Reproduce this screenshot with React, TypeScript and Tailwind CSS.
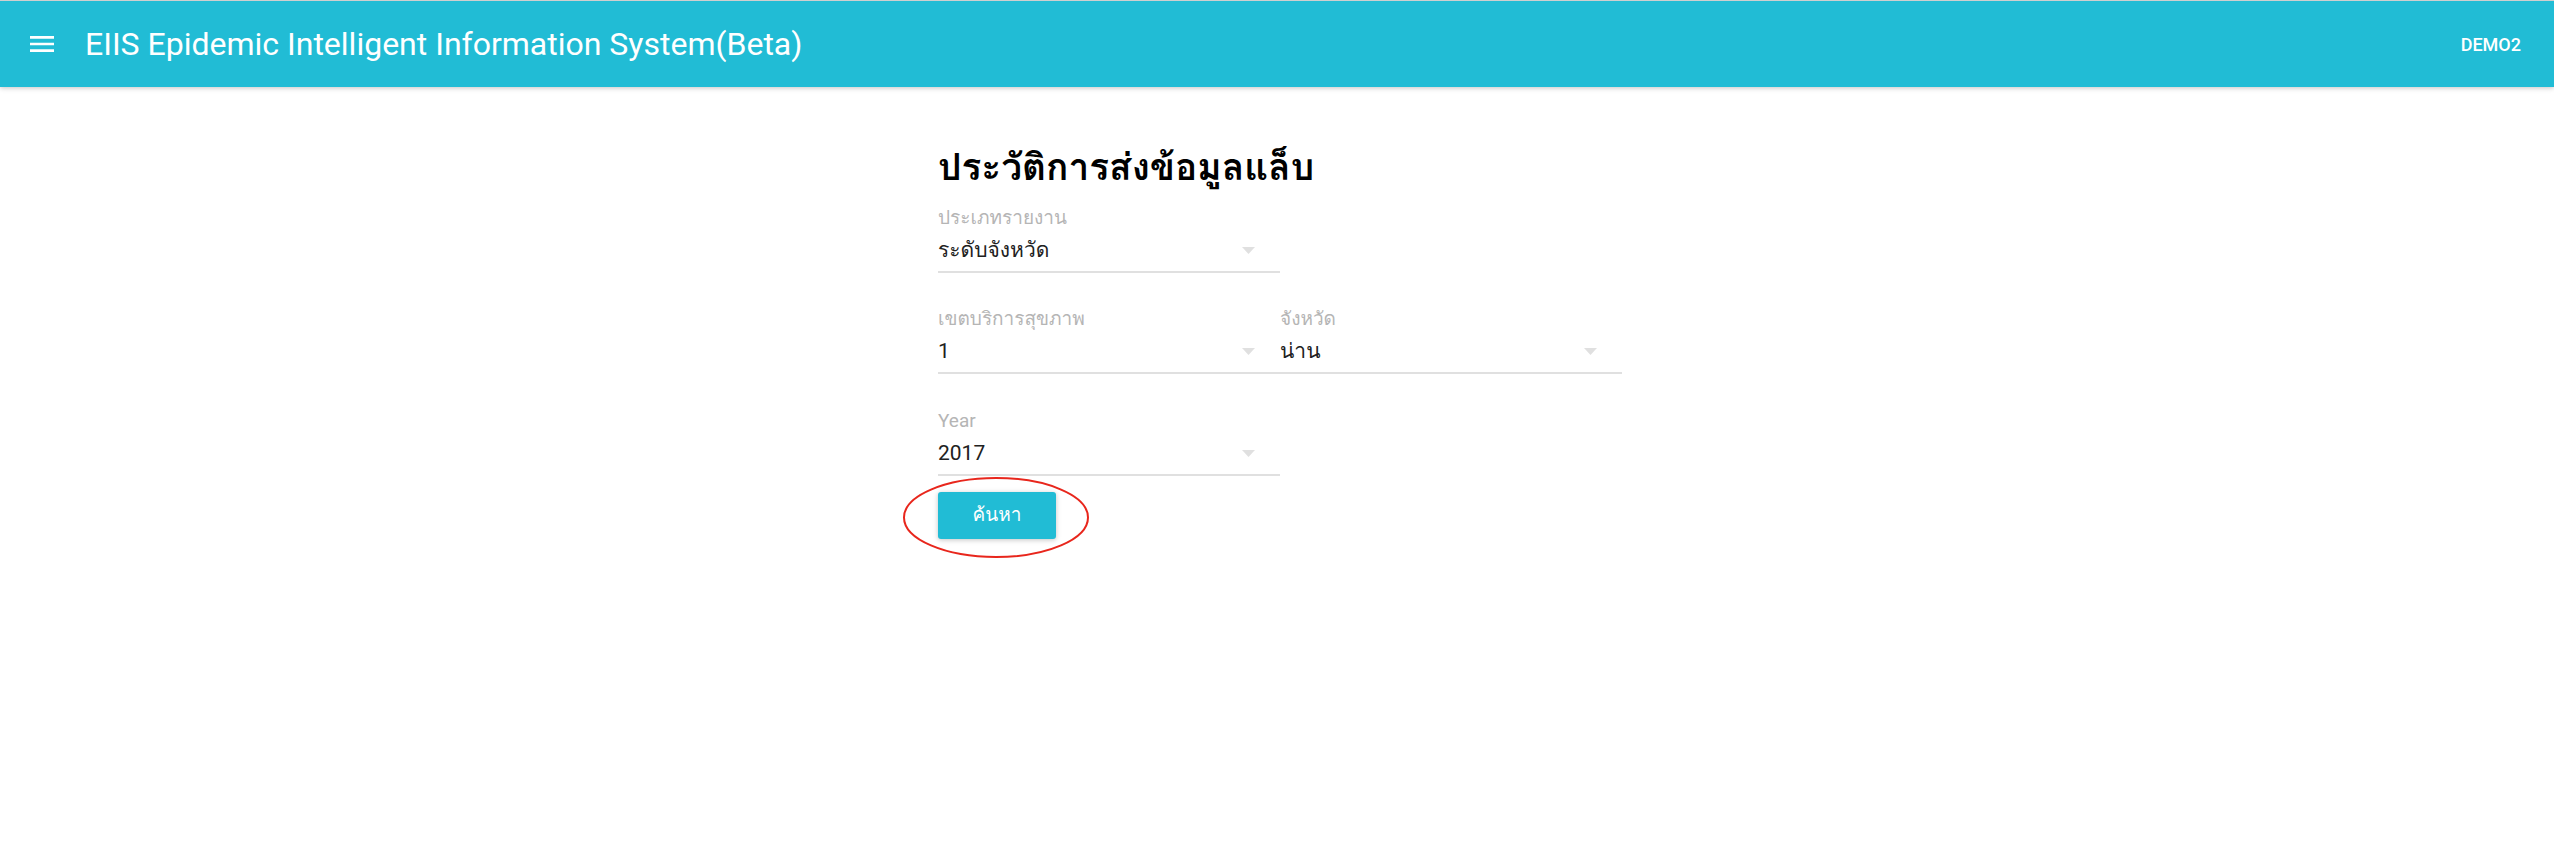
import React from 'react';

const font = { fontFamily: 'Roboto, Tahoma, Garuda, Loma, "Noto Sans Thai", "Noto Sans", "DejaVu Sans", sans-serif' };

const Arrow: React.FC = () => (
  <svg width="13" height="7" viewBox="0 0 13 7" className="shrink-0">
    <polygon points="0,0 13,0 6.5,7" fill="#e0e0e0" />
  </svg>
);

const SelectField: React.FC<{ label: string; value: string }> = ({ label, value }) => (
  <div className="w-[342px] flex flex-col">
    <div className="h-6 leading-6 text-[19px] text-[#b5b5b5] whitespace-nowrap">{label}</div>
    <div className="mt-1 h-8 flex items-center justify-between pr-[25px]">
      <span className="text-[21px] leading-8 text-[#212121] whitespace-nowrap">{value}</span>
      <Arrow />
    </div>
    <div className="mt-[5px] h-[2px] bg-[#e0e0e0]"></div>
  </div>
);

const App: React.FC = () => {
  return (
    <div className="min-h-screen bg-white" style={font}>
      {/* app bar */}
      <header className="relative z-10 border-t border-[#cfcfcf] h-[87px] bg-[#21bcd5] flex items-center pl-[26px] pr-[33px] shadow-[0_1px_6px_rgba(0,0,0,0.12),0_1px_4px_rgba(0,0,0,0.12)]">
        <svg width="32" height="32" viewBox="0 0 24 24" fill="white">
          <path d="M3 18h18v-2H3v2zm0-5h18v-2H3v2zm0-7v2h18V6H3z" />
        </svg>
        <h1 className="ml-[27px] text-[32px] text-white font-normal">EIIS Epidemic Intelligent Information System(Beta)</h1>
        <div className="ml-auto text-[18px] font-medium text-white">DEMO2</div>
      </header>

      <main className="w-[690px] mx-auto pl-[6px] pt-[59px]">
        <h2 className="text-[37px] leading-[44px] font-bold text-black whitespace-nowrap">ประวัติการส่งข้อมูลแล็บ</h2>

        <div className="mt-4">
          <SelectField label="ประเภทรายงาน" value="ระดับจังหวัด" />
        </div>
        <div className="mt-[34px] flex">
          <SelectField label="เขตบริการสุขภาพ" value="1" />
          <SelectField label="จังหวัด" value="น่าน" />
        </div>
        <div className="mt-[35px]">
          <SelectField label="Year" value="2017" />
        </div>

        <div className="relative mt-4 w-[118px]">
          <button className="w-[118px] h-[47px] rounded-[3px] bg-[#21bcd5] text-white text-[19px] shadow-[0_1px_6px_rgba(0,0,0,0.12),0_1px_4px_rgba(0,0,0,0.12)]">
            ค้นหา
          </button>
          <svg className="absolute left-[-35px] top-[-15px] pointer-events-none" width="186" height="81" viewBox="0 0 186 81">
            <ellipse cx="93" cy="40.5" rx="92" ry="39.5" fill="none" stroke="#e8261c" strokeWidth="2" />
          </svg>
        </div>
      </main>
    </div>
  );
};

export default App;
